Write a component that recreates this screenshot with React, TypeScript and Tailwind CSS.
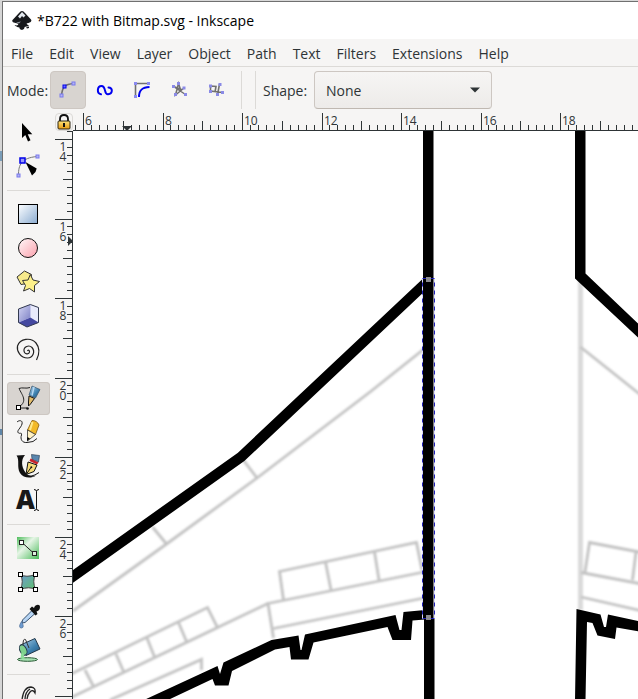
import type { ReactNode } from "react";

const menus = ["File", "Edit", "View", "Layer", "Object", "Path", "Text", "Filters", "Extensions", "Help"];

const INK = "#2e3436";
const UNIT = 79.5;
const TICKS = Array.from({ length: 260 }, (_, i) => i - 1);
const LABELS = [0, 10, 20, 30, 40, 50, 60];

function Node({ x, y, dark }: { x: number; y: number; dark?: boolean }) {
  return (
    <rect
      x={x - 1.5}
      y={y - 1.5}
      width="3"
      height="3"
      fill={dark ? "#6c6cff" : "#b4b4f0"}
      stroke={dark ? "#0000f0" : "#7878ee"}
    />
  );
}

const modes: { name: string; icon: ReactNode }[] = [
  {
    name: "Regular Bezier path",
    icon: (
      <>
        <path d="M4.500 17Q5 10 7.500 7.500Q10 5 17 4.500" fill="none" stroke="#707070" strokeWidth="1.600" />
        <Node x={4.5} y={16.5} />
        <Node x={16.5} y={4.5} />
        <Node x={7.5} y={7.5} dark />
      </>
    ),
  },
  {
    name: "Spiro path",
    icon: (
      <path
        d="M7 15.300C2.500 14.500 3 7 7.500 7C12.500 7 9.500 15.500 14 15.300C19 15 19 8.500 14.500 8.500"
        fill="none"
        stroke="#0000f0"
        strokeWidth="2"
        strokeLinecap="round"
      />
    ),
  },
  {
    name: "BSpline path",
    icon: (
      <>
        <path d="M4.500 17V4.500H18" fill="none" stroke="#707070" strokeWidth="1.600" />
        <path d="M8 18C8 11 11 8.300 18.500 8" fill="none" stroke="#0000f0" strokeWidth="2" />
        <path d="M3 3h3v3H3zM16 3h3v3h-3zM3 16h3v3H3z" fill="#8a8af0" />
      </>
    ),
  },
  {
    name: "Straight line segments",
    icon: (
      <>
        <path d="M5.500 7.500L17.500 15.500M16 9L7.500 16L10.500 4.500L13 12M5.500 7.500L13.500 10.500" fill="none" stroke="#707070" strokeWidth="1.500" />
        <path d="M4 6h3v3H4zM6 14h3v3H6zM14.500 7.500h3v3h-3zM16 14h3v3h-3zM9 3h3v3H9z" fill="#8a8ae6" />
      </>
    ),
  },
  {
    name: "Paraxial line segments",
    icon: (
      <>
        <path d="M5.500 7L11 7.500L10 13M5.500 7V12L17.500 13.500M14.500 5L12.500 16" fill="none" stroke="#707070" strokeWidth="1.600" />
        <path d="M4 5.500h3v3H4zM4 11h3v3H4zM13.500 4h3v3h-3zM16 12h3v3h-3zM11 14h3v3h-3z" fill="#8a8ae6" />
      </>
    ),
  },
];

const toolGroups: { name: string; icon: ReactNode }[][] = [
  [
    {
      name: "Selector",
      icon: <path d="M10 7V22L13.300 19L16 25.500L18.500 24.300L15.700 18.300H20.300Z" fill="#000" />,
    },
    {
      name: "Node editor",
      icon: (
        <>
          <path d="M6.500 25C6.500 15 9 8 25 6.500" fill="none" stroke="#777" />
          <path d="M13.500 12L24.700 18.500L23.500 22L20 25.500Z" fill="#000" />
          <Node x={25.5} y={6.5} />
          <Node x={6.5} y={25.5} />
          <rect x="8" y="8" width="5" height="5" fill="#9a9af8" stroke="#0000e8" strokeWidth="1.500" />
        </>
      ),
    },
  ],
  [
    {
      name: "Rectangle",
      icon: <rect x="6.500" y="6.500" width="19" height="19" fill="url(#blue)" stroke="#000" />,
    },
    {
      name: "Ellipse",
      icon: <circle cx="16" cy="16" r="9.500" fill="url(#pink)" stroke="#111" />,
    },
    {
      name: "Star",
      icon: (
        <>
          <path d="M12.500 5L19.500 8.500L18 17L9 18.500L5 11Z" fill="#f7ea8c" stroke="#333" />
          <path
            d="M18.300 8.500L21 14L27.500 15.500L22.500 19.500L22.500 26L17.500 22.500L11.500 25L13.500 19.500L10.500 14.500L16 14Z"
            fill="#fdf08a"
            stroke="#333"
          />
        </>
      ),
    },
    {
      name: "3D box",
      icon: (
        <>
          <path d="M6.500 9L18.300 4.500L26.500 7.500V22.500L15 27L6.500 22.500Z" fill="#b9bbe6" />
          <path d="M18.300 4.500L26.500 7.500V22.500L18.300 17.500Z" fill="#e8eafc" />
          <path d="M6.500 22.500L18.300 17.500L26.500 22.500L15 27Z" fill="#4448a0" />
          <path d="M6.500 9L18.300 4.500V17.500L6.500 22.500Z" fill="url(#cube)" />
          <path d="M6.500 9L18.300 4.500L26.500 7.500V22.500L15 27L6.500 22.500Z" fill="none" stroke="#333a50" />
        </>
      ),
    },
    {
      name: "Spiral",
      icon: (
        <path
          d="M15.500 17C16 15.500 17.800 16.300 17.500 18C17 20.800 12.500 20.500 12 17C11.500 12.500 17 10.500 20 13.500C23.500 17.500 21 24 15.500 24C8.500 24 4.500 17 5.500 12C8 4.500 19 3 24 9C28.500 14.500 27 21 24.500 26"
          fill="none"
          stroke="#222"
          strokeWidth="1.200"
        />
      ),
    },
  ],
  [
    {
      name: "Pen",
      icon: (
        <>
          <path d="M7 25C16 19 10 13 7 6.500C10 5 14 7 18 5.500M7 26H15" fill="none" stroke="#222" />
          <path d="M20 4L28 7.500L23.500 16L17 13Z" fill="url(#pen)" stroke="#31506c" strokeWidth=".7" />
          <path d="M22 5L20 13.500" stroke="#b8d8f2" strokeWidth="1.500" />
          <path d="M17 14L22.500 16.500L18.500 22L16.500 24L16.500 20Z" fill="#e4bd6b" stroke="#111" />
          <rect x="4.500" y="23.500" width="4" height="4" fill="#fff" stroke="#000" />
          <circle cx="15.500" cy="26.500" r="1.300" fill="#111" />
        </>
      ),
    },
    {
      name: "Pencil",
      icon: (
        <>
          <path d="M5 6C7 4 11 4 10 8C9 12 4 15 6.500 17C8 18 10 16 9.500 19C8 23 10 27 15 26.500Q22 26.500 25 22.500" fill="none" stroke="#222" />
          <path d="M15.500 14L20 4.500Q25 4.500 27 9L23.500 18.500Z" fill="#f2b928" stroke="#805810" strokeWidth=".8" />
          <path d="M20.500 6L18 14" stroke="#ffe88b" strokeWidth="2" />
          <path d="M15.500 14L23.500 18.500L15.500 25Z" fill="#fff1c2" stroke="#333" strokeWidth=".8" />
          <path d="M15.300 21L18 22.500L15 25Z" fill="#000" />
        </>
      ),
    },
    {
      name: "Calligraphy",
      icon: (
        <>
          <path d="M4.500 5.500L13 5C8.500 10 10 17 12.500 21C15 26 20 27 24 25.500C19 29 11 28 8 23C4.500 17 8 10 4.500 5.500Z" fill="#111" />
          <path d="M11 25Q19 28.500 27 22.500" fill="none" stroke="#111" />
          <path d="M19.500 4.500L27.500 5.500L26.500 12L20 9.500Z" fill="#5a86ae" stroke="#234" strokeWidth=".6" />
          <path d="M18.500 8.500L26.500 12.500L25 14.500L17.500 11Z" fill="#c8232a" />
          <path d="M16 12L25 15L22 21.500L14 24.500Z" fill="#f7dc7b" stroke="#111" />
          <path d="M14.500 24L19 17.500" stroke="#111" />
          <circle cx="19.300" cy="17.300" r="1" fill="#111" />
        </>
      ),
    },
    {
      name: "Text",
      icon: (
        <>
          <text x="4" y="25" className="font-['Open_Sans',sans-serif] text-[26px] font-extrabold" fill="#181818">
            A
          </text>
          <path d="M22 5.500Q24.500 5.500 24.500 7.500V24.500Q24.500 26.500 22 26.500M27 5.500Q24.500 5.500 24.500 7.500M27 26.500Q24.500 26.500 24.500 24.500" fill="none" stroke="#111" />
        </>
      ),
    },
  ],
  [
    {
      name: "Gradient",
      icon: (
        <>
          <rect x="5" y="5" width="22" height="22" fill="url(#green)" />
          <path d="M10 10.500L22 21.500" stroke="#222" />
          <rect x="7.500" y="8.500" width="4" height="4" fill="#fff" stroke="#222" />
          <rect x="20.500" y="19.500" width="4" height="4" fill="#ddf0dd" stroke="#222" />
        </>
      ),
    },
    {
      name: "Mesh",
      icon: (
        <>
          <path d="M8.500 8.500Q14 12 23.500 8.500Q20 15 23.500 23.500Q17 20 8.500 23.500Q12 15 8.500 8.500Z" fill="url(#mesh)" stroke="#444" />
          {[8.5, 23.5].map((x) =>
            [8.5, 23.5].map((y) => (
              <rect key={`${x}-${y}`} x={x - 2} y={y - 2} width="4" height="4" fill="#fff" stroke="#000" />
            )),
          )}
        </>
      ),
    },
    {
      name: "Dropper",
      icon: (
        <>
          <path d="M20 10.500L23 13.500L13 22.500L10 23L10.500 20Z" fill="#b7d5f4" stroke="#36506e" />
          <path d="M17.500 9L20 6.500L22 8C23 4.500 28 3.500 28 7C28 10 26 11 24.500 11.500L25.500 14L23.500 15.500Z" fill="#111" />
          <path d="M9.500 21.500Q5.500 28 9.500 28Q13 27.500 9.500 21.500Z" fill="#6d9bd0" stroke="#476a96" strokeWidth=".7" />
        </>
      ),
    },
    {
      name: "Paint bucket",
      icon: (
        <>
          <ellipse cx="15.500" cy="25.500" rx="10" ry="1.800" fill="#a5e0b0" stroke="#2c5c38" />
          <path d="M8.500 11L23 4.500L28 15L14 21.500Z" fill="url(#pen)" stroke="#23384a" />
          <ellipse cx="11.200" cy="16" rx="3.300" ry="5.500" transform="rotate(-25 11.200 16)" fill="#7ed18c" stroke="#23384a" />
          <path d="M9.500 18Q8 22 9.500 25L13 25Q11 22 12 20Z" fill="#8bdc98" />
          <path d="M11 11Q11 4 13.500 5.500L17 14" fill="none" stroke="#333" />
        </>
      ),
    },
  ],
  [
    {
      name: "Tweak",
      icon: (
        <path
          d="M10 18C11 9 14 5 19 5Q24 5.500 23 11Q21 7 18 10Q15 13 15 18M13 18Q13 10 18 7"
          fill="none"
          stroke="#222"
          strokeWidth="1.300"
        />
      ),
    },
  ],
];

function Gradients() {
  return (
    <svg className="absolute size-0" aria-hidden="true">
      <defs>
        <linearGradient id="blue" x2="1" y2="1">
          <stop offset=".1" stopColor="#f2f7fc" />
          <stop offset="1" stopColor="#8aabd0" />
        </linearGradient>
        <linearGradient id="pink" x2="1" y2="1">
          <stop offset=".1" stopColor="#fff0f2" />
          <stop offset="1" stopColor="#fba0ac" />
        </linearGradient>
        <linearGradient id="cube" x2="1" y2="1">
          <stop offset="0" stopColor="#d4d6f4" />
          <stop offset="1" stopColor="#7c80c4" />
        </linearGradient>
        <linearGradient id="green" x2="1" y2="1">
          <stop offset="0" stopColor="#4ebd5c" />
          <stop offset=".4" stopColor="#e6f5e6" />
          <stop offset="1" stopColor="#48ba58" />
        </linearGradient>
        <linearGradient id="mesh" x2="1" y2="1">
          <stop offset="0" stopColor="#6d9bd0" />
          <stop offset="1" stopColor="#5fc06a" />
        </linearGradient>
        <linearGradient id="pen" x2="1" y2="1">
          <stop offset="0" stopColor="#b4d6ee" />
          <stop offset=".6" stopColor="#3d80ae" />
          <stop offset="1" stopColor="#24557c" />
        </linearGradient>
        <linearGradient id="gold" x2="0" y2="1">
          <stop offset="0" stopColor="#ffe37a" />
          <stop offset="1" stopColor="#e89a10" />
        </linearGradient>
        <filter id="soft" x="-5%" y="-5%" width="110%" height="110%">
          <feGaussianBlur stdDeviation="1.1" />
        </filter>
      </defs>
    </svg>
  );
}

function tickLength(i: number) {
  if (i % 10 === 0) return 17;
  return i % 5 === 0 ? 9 : 5;
}

function HorizontalRuler() {
  return (
    <svg className="h-[18px] min-w-0 flex-1" aria-label="Horizontal ruler">
      {TICKS.map((i) => (
        <rect key={i} x={Math.round(10 + (i * UNIT) / 10)} y={17 - tickLength(i)} width="1" height={tickLength(i)} fill={INK} />
      ))}
      <rect y="17" width="100%" height="1" fill={INK} />
      <path d="M49 13H59L54 18Z" fill={INK} />
      {LABELS.map((i) => (
        <text key={i} x={Math.round(12 + (i * UNIT) / 10)} y="12" fill={INK} className="text-[12px]">
          {6 + i / 5}
        </text>
      ))}
    </svg>
  );
}

function VerticalRuler() {
  return (
    <svg className="h-full w-[18px] shrink-0" aria-label="Vertical ruler">
      {TICKS.map((i) => (
        <rect key={i} x={17 - tickLength(i)} y={Math.round(8 + (i * UNIT) / 10)} width={tickLength(i)} height="1" fill={INK} />
      ))}
      <rect x="17" width="1" height="100%" fill={INK} />
      <path d="M13 105V115L18 110Z" fill={INK} />
      {LABELS.map((i) => {
        const y = Math.round(20 + (i * UNIT) / 10);
        const [a, b] = String(14 + i / 5);
        return (
          <text key={i} fill={INK} textAnchor="middle" className="text-[12px]">
            <tspan x="8" y={y}>{a}</tspan>
            <tspan x="8" y={y + 10}>{b}</tspan>
          </text>
        );
      })}
    </svg>
  );
}

function Drawing() {
  return (
    <svg className="h-full min-w-0 flex-1 bg-white" role="img" aria-label="Aircraft drawing">
      <g transform="translate(-73 -131)">
        <g fill="none" stroke="#c2c2c2" strokeWidth="2.800" filter="url(#soft)">
          <path d="M424 349L370 392L257 478L166.500 544L73 611M241 457L257 478M152.500 527L166.500 544" />
          <path d="M70 674.500L207.500 607.500L217.500 627.500L70 698M178.500 622.500L186.500 641.500M147 638L154.500 657M116 654L123.500 671.500M85 670L93.500 686.500M217.500 627.500L268 603.500" />
          <path d="M110 700L201.500 659.500V670" />
          <path d="M273.500 638L268 603.500L424 572M273.500 628.500L424 598M283.500 600L279.500 571.500L416.500 542.500L422 570M325.500 562L331 590M374.500 552L379 580" />
          <path d="M580.500 278V610" strokeWidth="5" stroke="#dadada" />
          <path d="M580.500 347L642 396M585 572L589.500 542.500L642 552.500M581 572.500L642 584M581 597L642 611M636 552L632.500 580" />
        </g>
        <path d="M423 131H433.500V618H434.500V700H424V618H423Z" />
        <path d="M428 281L241 457L70 578.500" fill="none" stroke="#000" strokeWidth="10.500" />
        <path d="M425 610L403.500 612L401.500 630L399.500 630L395.500 615L305 634.500L301.500 650H300.500L298.500 635.500L271.500 640L223.500 662.500L220 674L217.500 666L144 700H168L212.500 679L215 685.500H228.500L232 671L275 649.500L289.500 647L291 659.500H308.500L313.500 642.500L387.500 627L392.500 640H411L412.500 620.500L425 619.500Z" />
        <path d="M575 131H585.500V273.500L640 325.500V339.500L575 278.500Z" />
        <path d="M576.500 609L600.500 614.500L604 627H606L608 614.500L640 621.500V631.500L616.500 627.500L615 639L597.500 635.500L592.500 623L587 622L585.500 700H575Z" />
        <rect x="422.500" y="278.500" width="12" height="340" fill="none" stroke="#dcdcf8" />
        <rect x="422.500" y="278.500" width="12" height="340" fill="none" stroke="#2020b8" strokeDasharray="4 4" />
        <path d="M426 277h5v5h-5zM426 615h5v5h-5z" fill="#8c8c90" />
      </g>
    </svg>
  );
}

export default function App() {
  return (
    <div className="flex h-screen flex-col overflow-hidden bg-[#d8d8d8] pt-px font-['Open_Sans','Noto_Sans',sans-serif] text-[#2e3436]">
      <Gradients />
      <div className="flex min-h-0 flex-1">
        <div className="w-[2px] shrink-0 bg-[linear-gradient(#d6d6d6_150px,#7a9db8_150px,#7a9db8_160px,#d6d6d6_160px,#d6d6d6_428px,#5f86a8_428px,#5f86a8_434px,#d6d6d6_434px)]" />
        <div className="flex min-w-0 flex-1 flex-col border-t border-l border-[#707070] bg-[#f6f5f4]">
          <header className="flex h-[37px] shrink-0 items-center gap-1 bg-white pl-2 text-black">
            <svg className="size-[22px]" viewBox="0 0 22 22" aria-hidden="true">
              <path d="M11 1Q12.500 1 14 3L20 9.500Q21.500 12 17.500 13Q14 13.500 17 15Q19 16 15.500 16.500L13.500 17Q14 19 11 20Q8 19.500 8.500 17.500Q3 16.500 7 15Q8 13.500 4.500 13Q-.5 12 2 9.500L8 3Q9.500 1 11 1Z" fill="#17191c" />
              <path d="M11 2L14.500 5.500L12.500 7.500L11 6L9 8.500L7 6.500Z" fill="#e4e9ef" />
              <path d="M5 12.500L10 11.500L8 13.500Z" fill="#8d959e" />
              <path d="M15 17.500l3-1v1.500l-2 .5zM3.500 15.500l2-.5v1.500z" fill="#17191c" />
            </svg>
            <h1 className="text-[14px]">*B722 with Bitmap.svg - Inkscape</h1>
          </header>
          <nav className="flex h-[28px] shrink-0 items-center border-b border-[#dcdad7] pt-[2px] pl-2" aria-label="Main menu">
            <div className="flex gap-4">
              {menus.map((m) => (
                <button key={m} type="button" className="text-[14px]">
                  {m}
                </button>
              ))}
            </div>
          </nav>
          <div className="flex h-[46px] shrink-0 items-center pl-1 text-[14px]">
            <span className="w-[43px]">Mode:</span>
            <div className="flex gap-px">
              {modes.map((m, i) => (
                <button
                  key={m.name}
                  type="button"
                  aria-label={m.name}
                  aria-pressed={i === 0}
                  className="flex h-[38px] w-[36px] items-center justify-center rounded border border-transparent aria-pressed:border-[#cdc7c2] aria-pressed:bg-[#d8d4d0]"
                >
                  <svg className="size-[22px]" viewBox="0 0 22 22">
                    {m.icon}
                  </svg>
                </button>
              ))}
            </div>
            <div className="ml-[7px] h-[38px] w-[15px] border-x border-[#dcdad7]" />
            <label htmlFor="shape" className="ml-[7px] w-[51px]">
              Shape:
            </label>
            <div className="relative">
              <select
                id="shape"
                className="h-[38px] w-[178px] appearance-none rounded border border-[#cdc7c2] border-b-[#bfb8b1] bg-linear-to-b from-[#f6f5f4] to-[#edebe9] pl-[11px]"
              >
                <option>None</option>
                <option>Triangle in</option>
                <option>Ellipse</option>
              </select>
              <svg className="pointer-events-none absolute top-4 right-3 h-[6px] w-[10px]" viewBox="0 0 10 6">
                <path d="M0 .5H10L5 5.500Z" fill={INK} />
              </svg>
            </div>
          </div>
          <div className="flex min-h-0 flex-1">
            <aside className="flex w-[52px] shrink-0 flex-col pt-[2px] pl-1" aria-label="Toolbox">
              {toolGroups.map((group, g) => (
                <div key={g} className="flex shrink-0 flex-col">
                  {g > 0 && <hr className="mt-[7px] mb-[6px] w-[43px] border-[#dcdad7]" />}
                  {group.map((t) => (
                    <button
                      key={t.name}
                      type="button"
                      aria-label={t.name}
                      aria-pressed={t.name === "Pen"}
                      className="mt-px flex h-[33px] w-[43px] justify-center rounded inset-ring inset-ring-transparent aria-pressed:bg-[#d8d4d0] aria-pressed:inset-ring-[#cdc7c2]"
                    >
                      <svg className="h-[32px] w-[33px] shrink-0 overflow-visible" viewBox="0 0 33 32">
                        {t.icon}
                      </svg>
                    </button>
                  ))}
                </div>
              ))}
            </aside>
            <div className="flex min-w-0 flex-1 flex-col">
              <div className="flex h-[18px] shrink-0">
                <button
                  type="button"
                  aria-label="Lock guides"
                  className="flex h-[18px] w-[18px] shrink-0 items-center justify-center rounded border border-[#dcdad7]"
                >
                  <svg className="size-4 shrink-0" viewBox="0 0 16 16">
                    <path d="M4 7V5Q4 1 8 1Q12 1 12 5V7" fill="none" stroke="#111" strokeWidth="1.800" />
                    <rect x="2" y="7" width="12" height="8" rx="1" fill="url(#gold)" stroke="#2c2410" />
                    <path d="M7 9h2v4H7z" fill="#111" />
                  </svg>
                </button>
                <HorizontalRuler />
              </div>
              <div className="flex min-h-0 flex-1">
                <VerticalRuler />
                <Drawing />
              </div>
            </div>
          </div>
        </div>
      </div>
    </div>
  );
}
